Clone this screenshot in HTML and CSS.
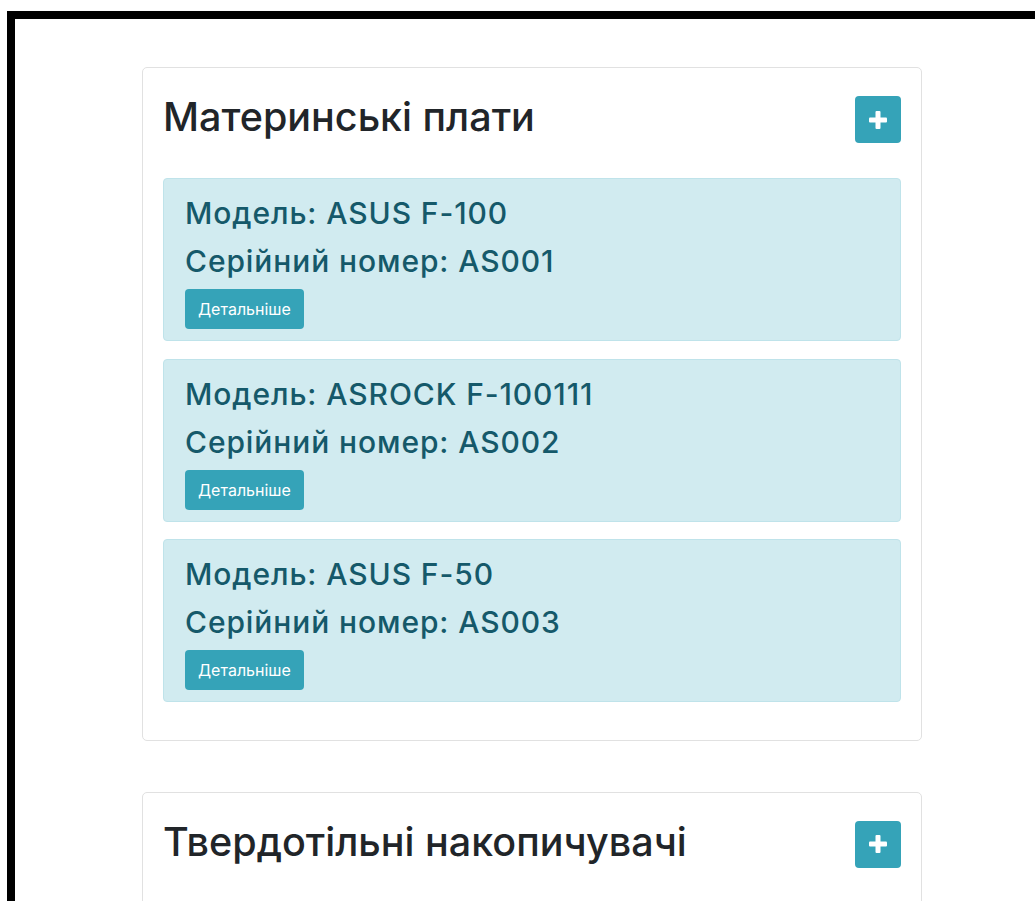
FILE: index.html
```html
<!DOCTYPE html>
<html lang="uk">
<head>
<meta charset="utf-8">
<title>Комплектуючі</title>
<link rel="stylesheet" href="styles.css">
</head>
<body>
<div class="frame">
  <section class="card">
    <header class="card-head">
      <h1 class="card-title">Материнські плати</h1>
      <button class="btn btn-add" type="button" aria-label="Додати">
        <svg width="18" height="18" viewBox="0 0 18 18" aria-hidden="true">
          <rect x="6.5" y="0" width="5" height="18" rx="1" fill="#fff"/>
          <rect x="0" y="6.5" width="18" height="5" rx="1" fill="#fff"/>
        </svg>
      </button>
    </header>
    <div class="item">
      <h3 class="item-line">Модель: ASUS F-100</h3>
      <h3 class="item-line">Серійний номер: AS001</h3>
      <button class="btn btn-more" type="button">Детальніше</button>
    </div>
    <div class="item">
      <h3 class="item-line">Модель: ASROCK F-100111</h3>
      <h3 class="item-line">Серійний номер: AS002</h3>
      <button class="btn btn-more" type="button">Детальніше</button>
    </div>
    <div class="item">
      <h3 class="item-line">Модель: ASUS F-50</h3>
      <h3 class="item-line">Серійний номер: AS003</h3>
      <button class="btn btn-more" type="button">Детальніше</button>
    </div>
  </section>

  <section class="card">
    <header class="card-head">
      <h1 class="card-title">Твердотільні накопичувачі</h1>
      <button class="btn btn-add" type="button" aria-label="Додати">
        <svg width="18" height="18" viewBox="0 0 18 18" aria-hidden="true">
          <rect x="6.5" y="0" width="5" height="18" rx="1" fill="#fff"/>
          <rect x="0" y="6.5" width="18" height="5" rx="1" fill="#fff"/>
        </svg>
      </button>
    </header>
  </section>
</div>
</body>
</html>
```

FILE: styles.css
```css
* {
  box-sizing: border-box;
}

html, body {
  margin: 0;
  background: #fff;
}

body {
  padding: 11px 0 0 7px;
  font-family: Inter, "Liberation Sans", Arial, sans-serif;
  color: #212529;
  overflow: hidden;
}

.frame {
  border-left: 8px solid #000;
  border-top: 8px solid #000;
  min-height: calc(100vh - 11px);
  padding-top: 48px;
  padding-left: 127px;
}

.card {
  width: 780px;
  border: 1px solid #e1e1e1;
  border-radius: 5px;
  padding: 20px;
  margin-bottom: 51px;
  background: #fff;
}

.card-head {
  display: flex;
  justify-content: space-between;
  align-items: flex-start;
  padding-top: 5px;
  margin-bottom: 35px;
}

.card-title {
  margin: 0;
  font-size: 39.5px;
  line-height: 48px;
  font-weight: 500;
  color: #212529;
}

.btn {
  border: 0;
  border-radius: 4px;
  background: #35a3b8;
  color: #fff;
  cursor: pointer;
  font-family: inherit;
}

.btn-add {
  width: 46px;
  height: 47px;
  margin-top: 3px;
  display: flex;
  align-items: center;
  justify-content: center;
  padding: 0;
}

.item {
  background: #d1ebf0;
  border: 1px solid #bfe3ea;
  border-radius: 4px;
  padding: 14px 20px 11px 21px;
  margin-bottom: 17.5px;
  color: #15596a;
}

.item-line {
  margin: 0 0 8px;
  font-size: 30px;
  line-height: 40px;
  font-weight: 500;
  letter-spacing: 0.9px;
}

.btn-more {
  display: block;
  height: 40px;
  padding: 0 13px;
  font-size: 16px;
}
```
